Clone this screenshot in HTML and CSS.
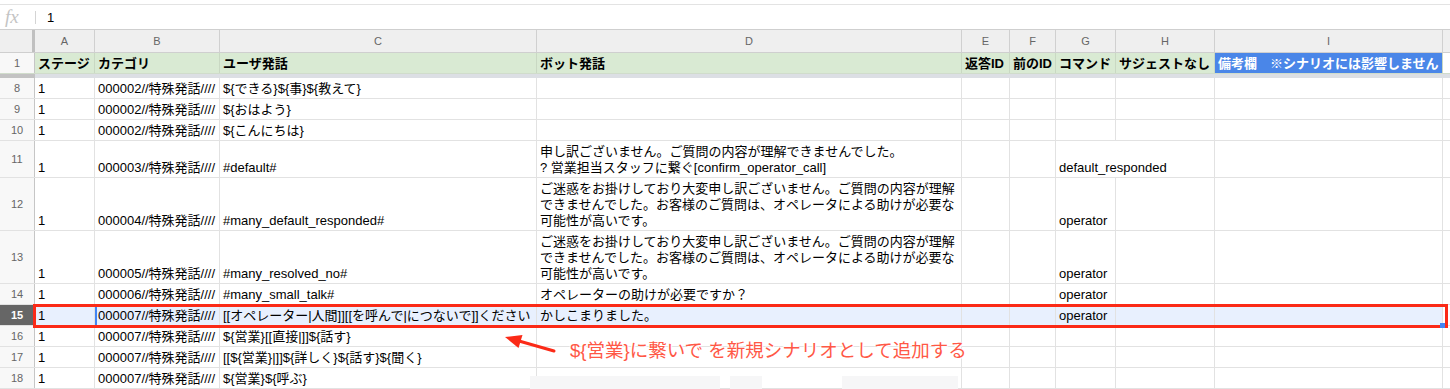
FILE: index.html
```html
<!DOCTYPE html>
<html lang="ja">
<head>
<meta charset="utf-8">
<title>Sheet</title>
<link rel="stylesheet" href="styles.css">
</head>
<body>
<div class="app">
  <div class="topgap"></div>
  <div class="fbar">
    <span class="fx">fx</span>
    <span class="fsep"></span>
    <span class="fval">1</span>
  </div>
  <div class="sheet">
    <div class="row colhdr">
      <div class="rh corner"></div>
      <div class="ch">A</div><div class="ch">B</div><div class="ch">C</div><div class="ch">D</div><div class="ch">E</div><div class="ch">F</div><div class="ch">G</div><div class="ch">H</div><div class="ch">I</div><div class="ch tail"></div>
    </div>
    <div class="row r1">
      <div class="rh">1</div>
      <div class="c">ステージ</div><div class="c">カテゴリ</div><div class="c">ユーザ発話</div><div class="c">ボット発話</div><div class="c">返答ID</div><div class="c">前のID</div><div class="c">コマンド</div><div class="c">サジェストなし</div><div class="c note">備考欄　※シナリオには影響しません</div><div class="c tail"></div>
    </div>
    <div class="freeze"><div class="fz-rh"></div><div class="fz-rest"></div></div>

    <div class="row h1">
      <div class="rh">8</div>
      <div class="c">1</div><div class="c">000002//特殊発話////</div><div class="c">${できる}${事}${教えて}</div><div class="c"></div><div class="c"></div><div class="c"></div><div class="c"></div><div class="c"></div><div class="c"></div><div class="c tail"></div>
    </div>
    <div class="row h1">
      <div class="rh">9</div>
      <div class="c">1</div><div class="c">000002//特殊発話////</div><div class="c">${おはよう}</div><div class="c"></div><div class="c"></div><div class="c"></div><div class="c"></div><div class="c"></div><div class="c"></div><div class="c tail"></div>
    </div>
    <div class="row h1">
      <div class="rh">10</div>
      <div class="c">1</div><div class="c">000002//特殊発話////</div><div class="c">${こんにちは}</div><div class="c"></div><div class="c"></div><div class="c"></div><div class="c"></div><div class="c"></div><div class="c"></div><div class="c tail"></div>
    </div>
    <div class="row h2">
      <div class="rh">11</div>
      <div class="c">1</div><div class="c">000003//特殊発話////</div><div class="c">#default#</div><div class="c"><span>申し訳ございません。ご質問の内容が理解できませんでした。<br>? 営業担当スタッフに繋ぐ[confirm_operator_call]</span></div><div class="c"></div><div class="c"></div><div class="c span2">default_responded</div><div class="c"></div><div class="c tail"></div>
    </div>
    <div class="row h3">
      <div class="rh">12</div>
      <div class="c">1</div><div class="c">000004//特殊発話////</div><div class="c">#many_default_responded#</div><div class="c"><span>ご迷惑をお掛けしており大変申し訳ございません。ご質問の内容が理解<br>できませんでした。お客様のご質問は、オペレータによる助けが必要な<br>可能性が高いです。</span></div><div class="c"></div><div class="c"></div><div class="c">operator</div><div class="c"></div><div class="c"></div><div class="c tail"></div>
    </div>
    <div class="row h3">
      <div class="rh">13</div>
      <div class="c">1</div><div class="c">000005//特殊発話////</div><div class="c">#many_resolved_no#</div><div class="c"><span>ご迷惑をお掛けしており大変申し訳ございません。ご質問の内容が理解<br>できませんでした。お客様のご質問は、オペレータによる助けが必要な<br>可能性が高いです。</span></div><div class="c"></div><div class="c"></div><div class="c">operator</div><div class="c"></div><div class="c"></div><div class="c tail"></div>
    </div>
    <div class="row h1">
      <div class="rh">14</div>
      <div class="c">1</div><div class="c">000006//特殊発話////</div><div class="c">#many_small_talk#</div><div class="c">オペレーターの助けが必要ですか？</div><div class="c"></div><div class="c"></div><div class="c">operator</div><div class="c"></div><div class="c"></div><div class="c tail"></div>
    </div>
    <div class="row h1 sel">
      <div class="rh">15</div>
      <div class="c">1</div><div class="c active">000007//特殊発話////</div><div class="c">[[オペレーター|人間]][[を呼んで|につないで]]ください</div><div class="c">かしこまりました。</div><div class="c"></div><div class="c"></div><div class="c">operator</div><div class="c"></div><div class="c"></div><div class="c tail"></div>
    </div>
    <div class="row h1">
      <div class="rh">16</div>
      <div class="c">1</div><div class="c">000007//特殊発話////</div><div class="c">${営業}[[直接|]]${話す}</div><div class="c"></div><div class="c"></div><div class="c"></div><div class="c"></div><div class="c"></div><div class="c"></div><div class="c tail"></div>
    </div>
    <div class="row h1">
      <div class="rh">17</div>
      <div class="c">1</div><div class="c">000007//特殊発話////</div><div class="c">[[${営業}|]]${詳しく}${話す}${聞く}</div><div class="c"></div><div class="c"></div><div class="c"></div><div class="c"></div><div class="c"></div><div class="c"></div><div class="c tail"></div>
    </div>
    <div class="row h1">
      <div class="rh">18</div>
      <div class="c">1</div><div class="c">000007//特殊発話////</div><div class="c">${営業}${呼ぶ}</div><div class="c"></div><div class="c"></div><div class="c"></div><div class="c"></div><div class="c"></div><div class="c"></div><div class="c tail"></div>
    </div>
  </div>

  <div class="ghost g1"></div>
  <div class="ghost g2"></div>
  <div class="ghost g3"></div>

  <div class="redbox"></div>
  <div class="handle"></div>
  <svg class="arrow" width="60" height="30" viewBox="0 0 60 30">
    <line x1="54" y1="21" x2="19" y2="11" stroke="#fb2a17" stroke-width="3" stroke-linecap="round"/>
    <polygon points="5,7 22.5,5 18.5,18" fill="#fb2a17"/>
  </svg>
  <div class="anno">${営業}に繋いで を新規シナリオとして追加する</div>
</div>
</body>
</html>
```

FILE: styles.css
```css
* { box-sizing: border-box; }
html, body { margin: 0; padding: 0; background: #fff; }
body {
  font-family: "Liberation Sans", "Noto Sans CJK JP", sans-serif;
  font-size: 13px;
  color: #000;
}
.app { position: relative; width: 1450px; height: 389px; overflow: hidden; }

.topgap { height: 5px; border-bottom: 1px solid #e3e3e3; }
.fbar {
  height: 25px;
  display: flex;
  align-items: center;
  border-bottom: 1px solid #cfcfcf;
}
.fx {
  width: 35px;
  padding-left: 5px;
  font-family: "Liberation Serif", serif;
  font-style: italic;
  font-size: 19px;
  color: #c4c4c4;
  line-height: 20px;
}
.fsep { width: 1px; height: 13px; background: #d4d4d4; }
.fval { padding-left: 11px; font-size: 13px; }

.row {
  display: grid;
  grid-template-columns: 35px 60px 125px 317px 425px 48px 46px 60px 99px 228px 7px;
  border-bottom: 1px solid #e2e2e2;
}
.row > div {
  border-right: 1px solid #e2e2e2;
  min-width: 0;
}
.rh {
  background: #f8f8f8;
  color: #666;
  font-size: 11px;
  display: flex;
  align-items: center;
  justify-content: center;
  border-right: 1px solid #c6c6c6 !important;
}
.c {
  padding: 2px 3px 1px;
  line-height: 16px;
  display: flex;
  align-items: flex-end;
  white-space: nowrap;
  overflow: visible;
}
.row > .tail { border-right: none; }

.colhdr { height: 23px; background: #efefef; border-bottom: 1px solid #cfcfcf; }
.colhdr > div { border-right: 1px solid #d0d0d0; }
.colhdr .corner {
  background: #efefef;
  border-right: 3px solid #c0c0c0 !important;
}
.ch {
  color: #666;
  font-size: 11px;
  display: flex;
  align-items: center;
  justify-content: center;
}

.r1 { height: 21px; background: #d9ead3; font-weight: bold; border-bottom-color: #d0dccb; }
.r1 > div { border-right-color: #c9d8c3; }
.r1 .rh { background: #f8f8f8; font-weight: normal; }
.r1 .c { align-items: center; padding-top: 1px; padding-bottom: 0; }
.r1 .note { background: #4a86e8; color: #fff; }
.r1 .tail { background: #fff; }

.freeze { display: flex; height: 4px; }
.fz-rh { width: 35px; background: #c3c3c3; }
.fz-rest { flex: 1; background: #dcdfe4; }

.h1 { height: 21px; }
.h2 { height: 37px; }
.h3 { height: 53px; }
.span2 { grid-column: span 2; }

.sel > .c { background: #e8f0fe; }
.sel > .tail { background: #fff; }
.sel .rh { background: #666; color: #fff; font-weight: bold; }
.sel .active { box-shadow: inset 2px 0 0 #4285f4; }

.ghost { position: absolute; top: 376px; height: 13px; background: #f6f6f7; }
.g1 { left: 530px; width: 190px; }
.g2 { left: 730px; width: 32px; }
.g3 { left: 842px; width: 116px; }

.redbox {
  position: absolute;
  left: 33px;
  top: 304px;
  width: 1415px;
  height: 24px;
  border: 3px solid #fb2a17;
}
.handle {
  position: absolute;
  left: 1440px;
  top: 323px;
  width: 5px;
  height: 5px;
  background: #4285f4;
}
.arrow { position: absolute; left: 500px; top: 330px; }
.anno {
  position: absolute;
  left: 570px;
  top: 339px;
  font-size: 18.5px;
  line-height: 24px;
  color: #ff5846;
  white-space: nowrap;
  text-shadow: 0 0 2px #fff, 0 0 2px #fff, 1px 1px 1px #fff, -1px -1px 1px #fff;
}
```
